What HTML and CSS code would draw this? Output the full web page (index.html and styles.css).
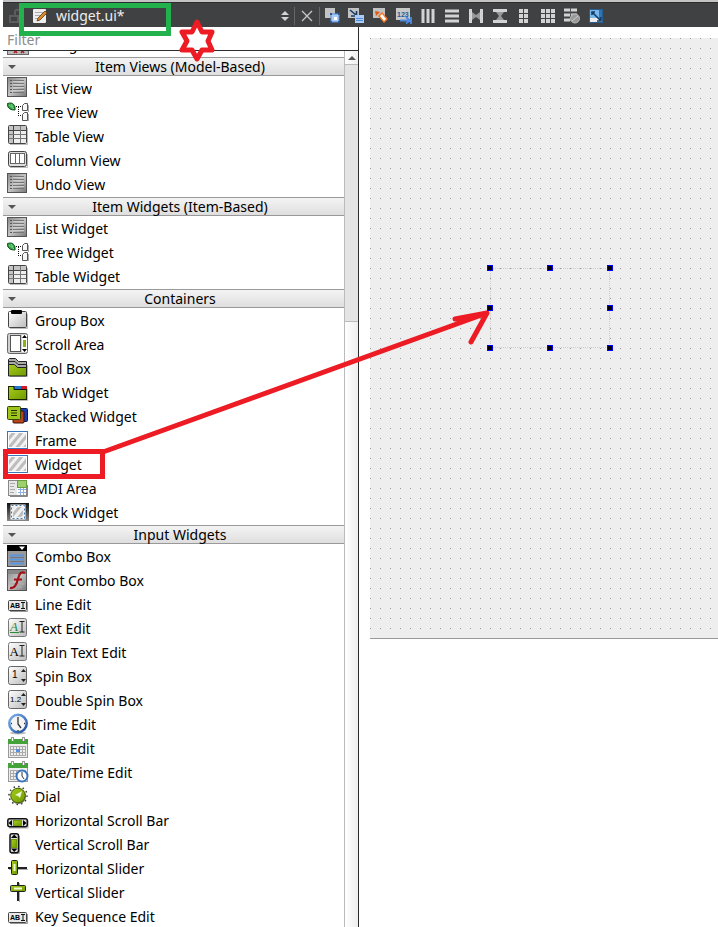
FILE: index.html
```html
<!DOCTYPE html>
<html lang="en">
<head>
<meta charset="utf-8">
<title>widget.ui</title>
<link rel="stylesheet" href="styles.css">
</head>
<body>
<svg class="paints" aria-hidden="true">
  <defs>
    <linearGradient id="g-light" x1="0" y1="0" x2="1" y2="1"><stop offset="0" stop-color="#fff"/><stop offset="1" stop-color="#bbb"/></linearGradient>
    <linearGradient id="g-grey" x1="0" y1="0" x2="1" y2="1"><stop offset="0" stop-color="#888"/><stop offset=".5" stop-color="#c4c4c4"/><stop offset="1" stop-color="#777"/></linearGradient>
    <linearGradient id="g-dark" x1="0" y1="0" x2="0" y2="1"><stop offset="0" stop-color="#111"/><stop offset="1" stop-color="#888"/></linearGradient>
    <linearGradient id="g-green" x1="0" y1="0" x2="1" y2="1"><stop offset="0" stop-color="#a5cc1c"/><stop offset="1" stop-color="#6f9a00"/></linearGradient>
    <linearGradient id="g-blue" x1="0" y1="0" x2="1" y2="1"><stop offset="0" stop-color="#7fb2ea"/><stop offset="1" stop-color="#1a4c9c"/></linearGradient>
    <pattern id="p-stripe" width="6" height="6" patternUnits="userSpaceOnUse" patternTransform="rotate(40)"><rect width="6" height="6" fill="#f2f2f2"/><rect width="3" height="6" fill="#bdbdbd"/></pattern>
  </defs>
</svg>
<svg class="symbols" aria-hidden="true">
  <symbol id="i-list" viewBox="0 0 22 22">
    <rect x=".5" y=".5" width="19" height="19" fill="url(#g-grey)" stroke="#555"/>
    <path d="M3 3.500h2M3 6.500h2M3 9.500h2M3 12.500h2M3 15.500h2" stroke="#555"/>
    <path d="M6 3.500h11M6 6.500h11M6 9.500h11M6 12.500h11M6 15.500h11" stroke="#777"/>
    <path d="M6 4.500h11M6 7.500h11M6 10.500h11M6 13.500h11" stroke="#ccc"/>
  </symbol>
  <symbol id="i-tree" viewBox="0 0 22 22">
    <path d="M0 3c3-2 7-1 8 3v3C4 9 1 8 0 3z" fill="#31a345" stroke="#0d4a18"/>
    <path d="M2 4l5 4M4 3l2 3" stroke="#9be29f" stroke-width=".8"/>
    <path d="M9 5.500h6M11.500 6v9M11 14.500h4" fill="none" stroke="#111" stroke-dasharray="1 1"/>
    <path d="M15.500 4.500l2-2h3v7h-5zM15.500 13.500l2-2h3v8h-5z" fill="#f7f7f7" stroke="#555"/>
    <path d="M21.500 4v7M21.500 13v7" stroke="#aaa"/>
  </symbol>
  <symbol id="i-table" viewBox="0 0 22 22">
    <path d="M3 19.500h17.500V3" stroke="#bbb" fill="none"/>
    <rect x="1.500" y=".5" width="18" height="18" rx="1" fill="#eee" stroke="#444"/>
    <path d="M2 1h17v4H2zM2 5h4v13H2z" fill="#c4c4c4"/>
    <path d="M6.500 1v17M2 5.500h17" stroke="#444" fill="none"/>
    <path d="M13.500 1v17M2 9.500h17M2 13.500h17" stroke="#777" fill="none"/>
  </symbol>
  <symbol id="i-column" viewBox="0 0 22 22">
    <path d="M3 18.500h17.500V5" stroke="#bbb" fill="none"/>
    <rect x="1.500" y="2.500" width="18" height="15" rx="2" fill="#ddd" stroke="#444"/>
    <rect x="3.500" y="4.500" width="14" height="10" fill="#fff" stroke="#666"/>
    <path d="M8.500 4v11M12.500 4v11" stroke="#666"/>
  </symbol>
  <symbol id="i-group" viewBox="0 0 22 22">
    <path d="M3 19.500h17.500V5" stroke="#bbb" fill="none"/>
    <rect x="1.500" y="2.500" width="18" height="16" rx="1" fill="url(#g-light)" stroke="#444"/>
    <rect x="4" y="1" width="11" height="4" rx="1" fill="#000"/>
  </symbol>
  <symbol id="i-scroll" viewBox="0 0 22 22">
    <rect x=".5" y=".5" width="20" height="20" rx="2" fill="#d0d0d0" stroke="#666"/>
    <rect x="3.500" y="2.500" width="10" height="16" fill="#fff" stroke="#555"/>
    <rect x="15" y="2" width="5" height="17" fill="#fff"/>
    <path d="M16 7h3v7h-3z" fill="#86b50e"/>
    <path d="M15 5l2.500-3L20 5zM15 16l2.500 3L20 16z" fill="#000"/>
  </symbol>
  <symbol id="i-toolbox" viewBox="0 0 22 22">
    <path d="M3 19.500h17.500V8" stroke="#bbb" fill="none"/>
    <path d="M1.500 2.500l1-1h6l3 3h8v14h-18z" fill="#aaa" stroke="#222"/>
    <path d="M2 4.500h6l3 3h8" fill="none" stroke="#222"/>
    <path d="M1.500 7.500h6l3 3h9v8.500h-18z" fill="url(#g-green)" stroke="#222"/>
  </symbol>
  <symbol id="i-tab" viewBox="0 0 22 22">
    <path d="M3 19.500h17.500V8" stroke="#bbb" fill="none"/>
    <rect x="1.500" y="5.500" width="18" height="13" fill="url(#g-green)" stroke="#1c2600"/>
    <path d="M7 5h7v3H7z" fill="#2076c8"/><path d="M14 5h6v3h-6z" fill="#d3182a"/>
    <path d="M7 5v3.500h12" fill="none" stroke="#111"/>
  </symbol>
  <symbol id="i-stack" viewBox="0 0 22 22">
    <rect x="9.500" y="3.500" width="11" height="13" rx="1" fill="#173fae" stroke="#0a1a4a"/>
    <rect x="6" y="6" width="11" height="12" rx="1" fill="#b9431b" stroke="#3b1004"/>
    <rect x=".5" y="1.500" width="13" height="13" rx="1" fill="#9fc51c" stroke="#334400"/>
    <path d="M4 5.500h6M4 8h6M4 10.500h6" stroke="#223300"/>
  </symbol>
  <symbol id="i-frame" viewBox="0 0 22 22">
    <rect x=".5" y="2.500" width="20" height="17" fill="#fff" stroke="#3a76bb"/>
    <rect x="2" y="4" width="17" height="14" fill="url(#p-stripe)"/>
  </symbol>
  <symbol id="i-mdi" viewBox="0 0 22 22">
    <path d="M3 19.500h17.500V8" stroke="#888" fill="none"/>
    <rect x="1.500" y="3.500" width="18" height="15" fill="#fff" stroke="#888"/>
    <rect x="2" y="4" width="8" height="14" fill="#e8e8e8"/>
    <path d="M3 6.500h5M3 9.500h4M3 12.500h5M3 15.500h4" stroke="#aaa"/>
    <rect x="10.500" y="3.500" width="9" height="7" fill="#9dd16d" stroke="#6a9d42"/>
    <path d="M11 12.500h8M11 15.500h8M13.500 11v7M16.500 11v7" stroke="#8ab0e2"/>
  </symbol>
  <symbol id="i-dock" viewBox="0 0 22 22">
    <rect y="2" width="22" height="18" fill="url(#g-dark)"/>
    <rect x="4.500" y="4.500" width="13" height="13" fill="#ddd"/>
    <rect x="6" y="6" width="10" height="10" fill="url(#p-stripe)"/>
    <rect x="4.500" y="4.500" width="13" height="13" fill="none" stroke="#fff" stroke-width="2"/>
    <rect x="4.500" y="4.500" width="13" height="13" fill="none" stroke="#3e75b5" stroke-dasharray="2 2"/>
  </symbol>
  <symbol id="i-combo" viewBox="0 0 22 22">
    <rect x=".5" y=".5" width="19" height="21" fill="#999" stroke="#444"/>
    <rect x="0" y="0" width="20" height="6" fill="#000"/>
    <path d="M12 1.500h6l-3 3.500z" fill="#fff"/>
    <path d="M3 10.500h14M3 14.500h14M3 18.500h14" stroke="#5c95df" stroke-width="2"/>
    <path d="M3 12.500h14M3 16.500h14" stroke="#777"/>
  </symbol>
  <symbol id="i-font" viewBox="0 0 22 22">
    <rect x=".5" y=".5" width="19" height="21" fill="url(#g-grey)" stroke="#555"/>
    <rect x="1" y="1" width="18" height="4" fill="#888"/>
    <path d="M3 11h14M3 15h14M3 18h12" stroke="#aaa" stroke-width="1.500"/>
    <path d="M18 4c-5-2-6 2-7 6s-3 10-8 9M7 10.500h8" fill="none" stroke="#a51218" stroke-width="2.200"/>
  </symbol>
  <symbol id="i-line" viewBox="0 0 22 22">
    <path d="M3 18.500h17.500V9" stroke="#999" fill="none"/>
    <rect x="1.500" y="7.500" width="18" height="10" rx="1" fill="#e8e8e8" stroke="#444"/>
    <text x="3" y="15" class="t-abi">AB</text>
    <path d="M14 9.500h4M16 10v5.500M14 15.500h4" stroke="#111" fill="none"/>
  </symbol>
  <symbol id="i-text" viewBox="0 0 22 22">
    <rect x="1.500" y="1.500" width="18" height="18" rx="2" fill="url(#g-light)" stroke="#777"/>
    <text x="3" y="14" class="t-a t-green">A</text><path d="M3 15.500h9" stroke="#2d8a3b"/>
    <path d="M12.500 4.500h5M15 5v10M12.500 15h5" stroke="#222" fill="none"/>
  </symbol>
  <symbol id="i-plain" viewBox="0 0 22 22">
    <rect x="1.500" y="1.500" width="18" height="18" rx="2" fill="url(#g-light)" stroke="#777"/>
    <text x="2.500" y="15" class="t-a">A</text>
    <path d="M12.500 4.500h5M15 5v10M12.500 15h5" stroke="#222" fill="none"/>
  </symbol>
  <symbol id="i-spin" viewBox="0 0 22 22">
    <rect x="1.500" y="1.500" width="18" height="18" rx="2" fill="url(#g-light)" stroke="#666"/>
    <text x="5" y="13" class="t-num">1</text>
    <path d="M14 7l2.500-3L19 7zM14 14l2.500 3L19 14z" fill="#222"/>
  </symbol>
  <symbol id="i-dspin" viewBox="0 0 22 22">
    <rect x="1.500" y="1.500" width="18" height="18" rx="2" fill="url(#g-light)" stroke="#666"/>
    <text x="3" y="13" class="t-num2">1.2</text>
    <path d="M14 7l2.500-3L19 7zM14 14l2.500 3L19 14z" fill="#222"/>
  </symbol>
  <symbol id="i-time" viewBox="0 0 22 22">
    <ellipse cx="11" cy="20" rx="8" ry="1.500" fill="#bbb"/>
    <circle cx="11" cy="10.500" r="8.700" fill="#f4f4f4" stroke="url(#g-blue)" stroke-width="2.500"/>
    <path d="M11 4v7l3 4M11 17v1M4 10.500h1M17 10.500h1" stroke="#333" stroke-width="1.300" fill="none"/>
  </symbol>
  <symbol id="i-date" viewBox="0 0 22 22">
    <rect x="1.500" y="3.500" width="19" height="17" fill="#eee" stroke="#999"/>
    <rect x="1" y="2" width="20" height="5" fill="#43a338"/>
    <path d="M5.500 0v4M16.500 0v4" stroke="#999" stroke-width="3"/><path d="M5.500 1v3M16.500 1v3" stroke="#fff"/>
    <path d="M3 9.500h16M3 12.500h16M3 15.500h16M3 18.500h16M3.500 9v10M6.500 9v10M9.500 9v10M12.500 9v10M15.500 9v10M18.500 9v10" stroke="#aaa" fill="none"/>
    <rect x="9" y="12" width="4" height="3" fill="#5a8fdd"/>
  </symbol>
  <symbol id="i-datetime" viewBox="0 0 22 22">
    <rect x="1.500" y="3.500" width="19" height="17" fill="#eee" stroke="#999"/>
    <rect x="1" y="2" width="20" height="5" fill="#43a338"/>
    <path d="M5.500 0v4M16.500 0v4" stroke="#999" stroke-width="3"/><path d="M5.500 1v3M16.500 1v3" stroke="#fff"/>
    <path d="M3 9.500h16M3 12.500h8M3 15.500h8M3 18.500h8M3.500 9v10M6.500 9v10M9.500 9v4" stroke="#aaa" fill="none"/>
    <circle cx="15" cy="15" r="5.500" fill="#fff" stroke="#3a75bd" stroke-width="2"/>
    <path d="M15 11v4l2 3" stroke="#333" fill="none"/>
  </symbol>
  <symbol id="i-dial" viewBox="0 0 22 22">
    <circle cx="11" cy="10.500" r="9" fill="none" stroke="#333" stroke-width="1.500" stroke-dasharray="1.500 3.200"/>
    <circle cx="11.500" cy="11.500" r="7.500" fill="#777"/>
    <circle cx="11" cy="10.500" r="7.300" fill="url(#g-green)" stroke="#466300"/>
    <path d="M15 6l-2 7-2-2-3-1z" fill="#eef7cf"/>
  </symbol>
  <symbol id="i-hscroll" viewBox="0 0 22 22">
    <path d="M2 19h19V11" stroke="#aaa" fill="none"/>
    <rect x=".8" y="9.800" width="19.500" height="8" rx="2" fill="#ddd" stroke="#111" stroke-width="1.500"/>
    <rect x="6.500" y="11.500" width="8" height="5" fill="url(#g-green)" stroke="#6f9a00"/>
    <path d="M5 11v6l-3.500-3zM16 11v6l3.500-3z" fill="#000"/>
  </symbol>
  <symbol id="i-vscroll" viewBox="0 0 22 22">
    <path d="M4 20.500h8.500V3" stroke="#aaa" fill="none"/>
    <rect x="3" y=".8" width="8.500" height="19" rx="2" fill="#ddd" stroke="#111" stroke-width="1.500"/>
    <rect x="4.500" y="6.500" width="5" height="8" fill="url(#g-green)" stroke="#6f9a00"/>
    <path d="M4 5h6.500L7.200 1.500zM4 15.500h6.500L7.200 19z" fill="#000"/>
  </symbol>
  <symbol id="i-hslider" viewBox="0 0 22 22">
    <path d="M2 12.500h19" stroke="#aaa"/><path d="M1 11h19" stroke="#222" stroke-width="2"/>
    <rect x="4.500" y="3.500" width="6" height="14" rx="1" fill="url(#g-green)" stroke="#222"/>
    <path d="M7.500 7v7" stroke="#f2fad5" stroke-width="2"/>
  </symbol>
  <symbol id="i-vslider" viewBox="0 0 22 22">
    <path d="M12.500 2v19" stroke="#aaa"/><path d="M11 1v19" stroke="#222" stroke-width="2"/>
    <rect x="3.500" y="4.500" width="15" height="6" rx="1" fill="url(#g-green)" stroke="#222"/>
    <path d="M7 7.500h8" stroke="#f2fad5" stroke-width="2"/>
  </symbol>
  <symbol id="i-buttons" viewBox="0 0 22 22">
    <rect x=".5" y="2.500" width="21" height="19" fill="#bbb" stroke="#666"/>
    <path d="M7 16l3 4M10 16l-3 4M14 16l3 4M17 16l-3 4" stroke="#a22" stroke-width="1.500"/>
  </symbol>
</svg>

<div class="app">
  <header class="toolbar">
    <div class="doc">
      <svg class="lock" viewBox="0 0 12 16" aria-hidden="true"><path d="M1 8h8v6H1zM6 8V4c0-3 5-3 5 0v1" fill="none" stroke="#5c5d5f" stroke-width="2"/></svg>
      <button class="doc-name" type="button">
        <svg class="page" viewBox="0 0 16 16" aria-hidden="true"><rect x="1" y="1" width="13" height="14" rx="1" fill="#eee"/><path d="M3 4.500h8M3 7.500h6M3 10.500h4" stroke="#aaa"/><path d="M5 13l1-3 7-7 2 2-7 7z" fill="#d8892b" stroke="#5e3a11" stroke-width=".8"/></svg>
        <span>widget.ui*</span>
        <svg class="updown" viewBox="0 0 8 12" aria-hidden="true"><path d="M0 5l4-4 4 4zM0 7l4 4 4-4z" fill="#d4d4d4"/></svg>
      </button>
    </div>
    <button class="close" type="button" aria-label="Close"><svg viewBox="0 0 16 16"><path d="M3 3l10 10M13 3L3 13" stroke="#c8c8c8" stroke-width="1.300"/></svg></button>
    <div class="tools">
      <button type="button" aria-label="Edit Widgets"><svg viewBox="0 0 16 16"><rect x="1" y="0" width="10" height="10" fill="#c2c2c2"/><rect x="7" y="6" width="8" height="8" fill="#a9ccf8" stroke="#5b8fd8"/><path d="M6 5h2v2H6zM14 5h2v2h-2zM6 13h2v2H6zM14 13h2v2h-2z" fill="#28559b"/><rect x="10" y="9" width="3" height="3" fill="#fff"/></svg></button>
      <button type="button" aria-label="Edit Signals"><svg viewBox="0 0 16 16"><rect x="0" y="0" width="11" height="10" fill="#c2c2c2"/><path d="M2 2l6 5M8.500 3v5H3" stroke="#173c69" stroke-width="1.600" fill="none"/><rect x="7" y="7" width="9" height="8" fill="#a9ccf8"/><path d="M8 10.500h7M8 12.500h7" stroke="#568cd3"/></svg></button>
      <button type="button" aria-label="Edit Buddies"><svg viewBox="0 0 16 16"><rect x="1" y="0" width="12" height="10" fill="#c2c2c2"/><path d="M3 3l5 1-4 4z" fill="#e05b11"/><path d="M6 8l4-4 6 7-4 4z" fill="#f17522"/><path d="M8 8l2-2 4 5-2 2z" fill="#fff"/></svg></button>
      <button type="button" aria-label="Edit Tab Order"><svg viewBox="0 0 16 16"><rect x="0" y="0" width="14" height="12" fill="#c8c8c8"/><text x="1" y="9" class="t-tab">123</text><path d="M4 12.500h9M10 9l4 3.500-4 3M15 9v7" stroke="#4d8ce2" stroke-width="1.800" fill="none"/></svg></button>
      <button type="button" aria-label="Lay Out Horizontally"><svg viewBox="0 0 16 16"><path d="M3 1v14M8 1v14M13 1v14" stroke="#d3d3d3" stroke-width="3"/></svg></button>
      <button type="button" aria-label="Lay Out Vertically"><svg viewBox="0 0 16 16"><path d="M1 3h14M1 8h14M1 13h14" stroke="#d3d3d3" stroke-width="3"/></svg></button>
      <button type="button" aria-label="Horizontal Splitter"><svg viewBox="0 0 16 16"><path d="M2.500 1v14M13.500 1v14" stroke="#d3d3d3" stroke-width="3"/><path d="M4 4l4 3 4-3v8L8 9l-4 3z" fill="#999"/></svg></button>
      <button type="button" aria-label="Vertical Splitter"><svg viewBox="0 0 16 16"><path d="M1 2.500h14M1 13.500h14" stroke="#d3d3d3" stroke-width="3"/><path d="M4 4l3 4-3 4h8L9 8l3-4z" fill="#999"/></svg></button>
      <button type="button" aria-label="Form Layout"><svg viewBox="0 0 16 16"><path d="M5 1v14M10 1v14" stroke="#d3d3d3" stroke-width="4" stroke-dasharray="4 1"/></svg></button>
      <button type="button" aria-label="Grid Layout"><svg viewBox="0 0 16 16"><path d="M3 1v14M8 1v14M13 1v14" stroke="#d3d3d3" stroke-width="4" stroke-dasharray="4 1"/></svg></button>
      <button type="button" aria-label="Break Layout"><svg viewBox="0 0 16 16"><path d="M0 2h13M0 7h13M0 12h8" stroke="#d3d3d3" stroke-width="3"/><path d="M6.500 0v14" stroke="#555"/><circle cx="11" cy="10.500" r="4.500" fill="#999" stroke="#bbb"/><path d="M8 13l6-5" stroke="#ccc"/></svg></button>
      <button type="button" aria-label="Adjust Size"><svg viewBox="0 0 16 16"><rect x="1.500" y="1.500" width="13" height="13" fill="#ececec" stroke="#285d93"/><path d="M2 2h9v8H2z" fill="#78b7e8"/><path d="M11 2h3v9h-3z" fill="#2f73b0"/><path d="M4 4l8 8M4 7V4h3M13 9v4H9" stroke="#123d68" stroke-width="1.600" fill="none"/></svg></button>
    </div>
  </header>

  <main class="body">
    <aside class="sidebar">
      <input class="filter" type="text" placeholder="Filter" aria-label="Filter">
      <div class="box">
        <div class="list">
          <ul class="clipped"><li><button type="button"><svg><use href="#i-buttons"/></svg>Dialog Button Box</button></li></ul>
          <h2><button type="button">Item Views (Model-Based)</button></h2>
          <ul>
            <li><button type="button"><svg><use href="#i-list"/></svg>List View</button></li>
            <li><button type="button"><svg><use href="#i-tree"/></svg>Tree View</button></li>
            <li><button type="button"><svg><use href="#i-table"/></svg>Table View</button></li>
            <li><button type="button"><svg><use href="#i-column"/></svg>Column View</button></li>
            <li><button type="button"><svg><use href="#i-list"/></svg>Undo View</button></li>
          </ul>
          <h2><button type="button">Item Widgets (Item-Based)</button></h2>
          <ul>
            <li><button type="button"><svg><use href="#i-list"/></svg>List Widget</button></li>
            <li><button type="button"><svg><use href="#i-tree"/></svg>Tree Widget</button></li>
            <li><button type="button"><svg><use href="#i-table"/></svg>Table Widget</button></li>
          </ul>
          <h2><button type="button">Containers</button></h2>
          <ul>
            <li><button type="button"><svg><use href="#i-group"/></svg>Group Box</button></li>
            <li><button type="button"><svg><use href="#i-scroll"/></svg>Scroll Area</button></li>
            <li><button type="button"><svg><use href="#i-toolbox"/></svg>Tool Box</button></li>
            <li><button type="button"><svg><use href="#i-tab"/></svg>Tab Widget</button></li>
            <li><button type="button"><svg><use href="#i-stack"/></svg>Stacked Widget</button></li>
            <li><button type="button"><svg><use href="#i-frame"/></svg>Frame</button></li>
            <li><button type="button"><svg><use href="#i-frame"/></svg>Widget</button></li>
            <li><button type="button"><svg><use href="#i-mdi"/></svg>MDI Area</button></li>
            <li><button type="button"><svg><use href="#i-dock"/></svg>Dock Widget</button></li>
          </ul>
          <h2><button type="button">Input Widgets</button></h2>
          <ul>
            <li><button type="button"><svg><use href="#i-combo"/></svg>Combo Box</button></li>
            <li><button type="button"><svg><use href="#i-font"/></svg>Font Combo Box</button></li>
            <li><button type="button"><svg><use href="#i-line"/></svg>Line Edit</button></li>
            <li><button type="button"><svg><use href="#i-text"/></svg>Text Edit</button></li>
            <li><button type="button"><svg><use href="#i-plain"/></svg>Plain Text Edit</button></li>
            <li><button type="button"><svg><use href="#i-spin"/></svg>Spin Box</button></li>
            <li><button type="button"><svg><use href="#i-dspin"/></svg>Double Spin Box</button></li>
            <li><button type="button"><svg><use href="#i-time"/></svg>Time Edit</button></li>
            <li><button type="button"><svg><use href="#i-date"/></svg>Date Edit</button></li>
            <li><button type="button"><svg><use href="#i-datetime"/></svg>Date/Time Edit</button></li>
            <li><button type="button"><svg><use href="#i-dial"/></svg>Dial</button></li>
            <li><button type="button"><svg><use href="#i-hscroll"/></svg>Horizontal Scroll Bar</button></li>
            <li><button type="button"><svg><use href="#i-vscroll"/></svg>Vertical Scroll Bar</button></li>
            <li><button type="button"><svg><use href="#i-hslider"/></svg>Horizontal Slider</button></li>
            <li><button type="button"><svg><use href="#i-vslider"/></svg>Vertical Slider</button></li>
            <li><button type="button"><svg><use href="#i-line"/></svg>Key Sequence Edit</button></li>
          </ul>
        </div>
        <div class="scrollbar">
          <button type="button" aria-label="Scroll up"><svg viewBox="0 0 8 4"><path d="M0 4l4-4 4 4z" fill="#555"/></svg></button>
          <div class="thumb"></div>
        </div>
      </div>
    </aside>
    <section class="workspace">
      <div class="form">
        <div class="selection">
          <i></i><i></i><i></i><i></i><i class="gap"></i><i></i><i></i><i></i><i></i>
        </div>
      </div>
    </section>
  </main>

  <svg class="marks" width="718" height="927" viewBox="0 0 718 927" fill="none" aria-hidden="true">
    <rect x="21.500" y="5.500" width="147" height="28" stroke="#22b14c" stroke-width="5"/>
    <g stroke="#ed1c24" stroke-linejoin="round">
      <path d="M197 22l5 10h10l-4 9 4 9h-10l-5 9-5-9h-10l5-9-5-9h10z" stroke-width="5"/>
      <rect x="5.500" y="451.500" width="97" height="25" stroke-width="5" stroke-linejoin="miter"/>
      <path d="M103 452L487 313M455 319l32-6-16 29" stroke-width="5" stroke-linecap="round"/>
    </g>
  </svg>
</div>
</body>
</html>
```
FILE: styles.css
```css
* {
  box-sizing: border-box;
}

body {
  margin: 0;
  background: #fff;
  color: #000;
  font-family: "Noto Sans", "Open Sans", sans-serif;
  font-size: 14px;
  line-height: 20px;
}

button {
  margin: 0;
  padding: 0;
  border: 0;
  background: none;
  color: inherit;
  font: inherit;
}

.paints {
  position: absolute;
  width: 0;
  height: 0;
}

.symbols {
  display: none;
}

.app {
  position: relative;
  display: flex;
  flex-direction: column;
  height: 100vh;
  padding-left: 3px;
  overflow: hidden;
}

.toolbar {
  display: flex;
  flex: none;
  align-items: center;
  height: 27px;
  padding-top: 2px;
  border-top: 2px solid #c4c4c4;
  background: #404142;
  box-shadow: inset 0 1px #2b2c2d;
}

.doc {
  display: flex;
  align-items: center;
  width: 292px;
  padding-left: 6px;
  border-right: 1px solid #666;
}

.lock {
  width: 12px;
  height: 16px;
}

.doc-name {
  display: flex;
  flex: 1;
  align-items: center;
  padding: 0 5px 0 11px;
  color: #eee;
  line-height: 18px;
  text-align: left;
}

.doc-name span {
  flex: 1;
  padding-left: 8px;
}

.page {
  width: 16px;
  height: 16px;
}

.updown {
  width: 8px;
  height: 12px;
}

.close,
.tools button {
  display: flex;
  align-items: center;
  justify-content: center;
  width: 24px;
  height: 18px;
}

.close svg,
.tools svg {
  width: 16px;
  height: 16px;
}

.tools {
  display: flex;
  border-left: 1px solid #666;
}

.body {
  display: flex;
  flex: 1;
  min-height: 0;
}

.sidebar {
  display: flex;
  flex: none;
  flex-direction: column;
  width: 356px;
  border-right: 1px solid #2b2c2d;
}

.filter {
  flex: none;
  width: 100%;
  height: 24px;
  padding: 2px 4px 0;
  border: 0;
  border-bottom: 1px solid #2b2c2d;
  outline: 0;
  background: #fff;
  font: inherit;
}

.filter::placeholder {
  color: #8c8c8c;
}

.box {
  display: flex;
  flex: 1;
  min-height: 0;
}

.list {
  flex: 1;
  overflow: hidden;
}

.list ul {
  margin: 0;
  padding: 0;
  list-style: none;
}

.list .clipped {
  display: flex;
  align-items: flex-end;
  height: 6px;
  overflow: hidden;
}

.list li button {
  display: flex;
  gap: 6px;
  width: 100%;
  height: 24px;
  padding-left: 4px;
  line-height: 24px;
  text-align: left;
}

.list li svg {
  flex: none;
  width: 22px;
  height: 22px;
}

.list h2 {
  height: 20px;
  margin: 0;
  font: inherit;
}

.list h2 button {
  display: flex;
  align-items: center;
  justify-content: center;
  width: 100%;
  height: 19px;
  padding: 0 0 0 5px;
  border: solid #999;
  border-width: 1px 0;
  background: linear-gradient(#f4f4f4, #dedede);
  line-height: 17px;
}

.list h2 button::before {
  margin-right: auto;
  border: solid transparent;
  border-top-color: #555;
  border-width: 4px 4px 0;
  content: "";
}

.list h2 button::after {
  margin-right: auto;
  content: "";
}

.scrollbar {
  width: 14px;
  border-left: 1px solid #bbb;
  background: linear-gradient(90deg, #fff, #eee);
}

.scrollbar button {
  display: flex;
  align-items: center;
  justify-content: center;
  width: 100%;
  height: 14px;
  border-bottom: 1px solid #bbb;
}

.scrollbar svg {
  width: 8px;
  height: 4px;
}

.thumb {
  height: 257px;
  border-bottom: 1px solid #bbb;
  background: #e4e4e4;
}

.workspace {
  flex: 1;
  padding: 11px 0 0 11px;
}

.form {
  position: relative;
  height: 601px;
  border-bottom: 1px solid #999;
  background: conic-gradient(at 1px 1px, #eee 75%, #999 0) 0 0 / 10px 10px;
}

.selection {
  position: absolute;
  top: 227px;
  left: 117px;
  display: grid;
  grid-template-columns: repeat(3, 6px);
  align-content: space-between;
  justify-content: space-between;
  width: 126px;
  height: 86px;
}

.selection::before {
  position: absolute;
  inset: 3px;
  border: 1px dotted #ccc;
  content: "";
}

.selection i {
  z-index: 1;
  height: 6px;
  border: 1px solid #00f;
  background: #000;
}

.selection .gap {
  visibility: hidden;
}

.marks {
  position: absolute;
  top: 0;
  left: 0;
  pointer-events: none;
}

.t-abi {
  font: bold 7px "Liberation Sans", sans-serif;
}

.t-a {
  font: 13px "Liberation Serif", serif;
}

.t-green {
  fill: #2d8a3b;
  font-style: italic;
}

.t-num {
  font: 10px "Liberation Sans", sans-serif;
}

.t-num2 {
  font: 8px "Liberation Sans", sans-serif;
}

.t-tab {
  fill: #28559b;
  font: bold 7px "Liberation Sans", sans-serif;
}
```
